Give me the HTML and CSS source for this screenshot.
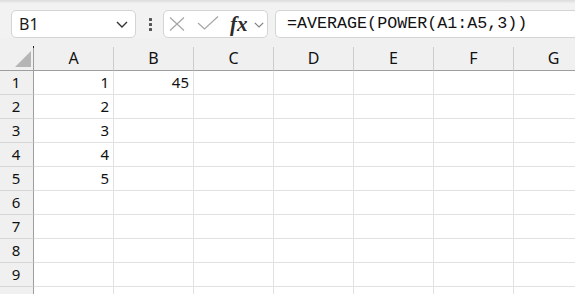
FILE: index.html
```html
<!DOCTYPE html>
<html>
<head>
<meta charset="utf-8">
<link rel="stylesheet" href="styles.css">
</head>
<body>
<div class="app">
  <div class="shade"></div>
  <div class="toolbar">
    <div class="namebox">
      <span class="name">B1</span>
      <svg class="chev" width="12" height="7" viewBox="0 0 12 7"><path d="M1 1 L6 6 L11 1" fill="none" stroke="#333" stroke-width="1.4"/></svg>
    </div>
    <div class="dots"><span></span><span></span><span></span></div>
    <div class="fxbox">
      <svg class="ico-x" width="16" height="14" viewBox="0 0 16 14"><path d="M1 0.5 L15 13.5 M15 0.5 L1 13.5" fill="none" stroke="#a6a6a6" stroke-width="1.2"/></svg>
      <svg class="ico-ok" width="22" height="14" viewBox="0 0 22 14"><path d="M1 7 L7.5 13 L21 0.5" fill="none" stroke="#a6a6a6" stroke-width="1.2"/></svg>
      <span class="fx">fx</span>
      <svg class="chev2" width="10" height="6" viewBox="0 0 10 6"><path d="M0.8 0.8 L5 5 L9.2 0.8" fill="none" stroke="#808080" stroke-width="1.2"/></svg>
    </div>
    <div class="formula">=AVERAGE(POWER(A1:A5,3))</div>
  </div>
  <div class="grid">
    <div class="corner"><span class="tri"></span><span class="dot"></span></div>
    <div class="ch">A</div><div class="ch">B</div><div class="ch">C</div><div class="ch">D</div><div class="ch">E</div><div class="ch">F</div><div class="ch">G</div>

    <div class="rh">1</div><div class="c">1</div><div class="c">45</div><div class="c"></div><div class="c"></div><div class="c"></div><div class="c"></div><div class="c"></div>
    <div class="rh">2</div><div class="c">2</div><div class="c"></div><div class="c"></div><div class="c"></div><div class="c"></div><div class="c"></div><div class="c"></div>
    <div class="rh">3</div><div class="c">3</div><div class="c"></div><div class="c"></div><div class="c"></div><div class="c"></div><div class="c"></div><div class="c"></div>
    <div class="rh">4</div><div class="c">4</div><div class="c"></div><div class="c"></div><div class="c"></div><div class="c"></div><div class="c"></div><div class="c"></div>
    <div class="rh">5</div><div class="c">5</div><div class="c"></div><div class="c"></div><div class="c"></div><div class="c"></div><div class="c"></div><div class="c"></div>
    <div class="rh">6</div><div class="c"></div><div class="c"></div><div class="c"></div><div class="c"></div><div class="c"></div><div class="c"></div><div class="c"></div>
    <div class="rh">7</div><div class="c"></div><div class="c"></div><div class="c"></div><div class="c"></div><div class="c"></div><div class="c"></div><div class="c"></div>
    <div class="rh">8</div><div class="c"></div><div class="c"></div><div class="c"></div><div class="c"></div><div class="c"></div><div class="c"></div><div class="c"></div>
    <div class="rh">9</div><div class="c"></div><div class="c"></div><div class="c"></div><div class="c"></div><div class="c"></div><div class="c"></div><div class="c"></div>
    <div class="rh">10</div><div class="c"></div><div class="c"></div><div class="c"></div><div class="c"></div><div class="c"></div><div class="c"></div><div class="c"></div>
  </div>
</div>
</body>
</html>
```
FILE: styles.css
```css
* { box-sizing: border-box; }
html, body {
  margin: 0;
  padding: 0;
  background: #f0f0f0;
}
.app {
  width: 575px;
  height: 294px;
  overflow: hidden;
  font-family: "Noto Sans", "Open Sans", sans-serif;
  color: #111;
  background: #f0f0f0;
}
.shade {
  height: 3px;
  background: linear-gradient(#dcdcdc, #ededed);
}
.toolbar {
  display: flex;
  align-items: stretch;
  height: 35px;
  padding: 7px 0 0 11px;
  background: #f2f2f2;
}
.namebox {
  width: 125px;
  height: 28px;
  background: #fff;
  border: 1px solid #d4d4d4;
  border-radius: 5px;
  display: flex;
  align-items: center;
  justify-content: space-between;
  padding: 0 7px 0 7px;
}
.name {
  font-size: 16px;
  line-height: 26px;
  color: #1a1a1a;
}
.chev { display: block; margin-top: 1px; }
.dots {
  width: 27px;
  display: flex;
  flex-direction: column;
  align-items: center;
  justify-content: center;
  gap: 2px;
  padding-left: 1px;
}
.dots span {
  width: 3px;
  height: 3px;
  background: #555;
  border-radius: 0.5px;
}
.fxbox {
  width: 105px;
  height: 28px;
  background: #fff;
  border: 1px solid #d4d4d4;
  border-radius: 5px;
  display: flex;
  align-items: center;
  padding-left: 5px;
}
.ico-x { display: block; }
.ico-ok { display: block; margin-left: 12px; margin-top: -2px; }
.fx {
  font-family: "Liberation Serif", "DejaVu Serif", serif;
  font-style: italic;
  font-weight: bold;
  font-size: 21px;
  color: #2b2b2b;
  margin-left: 11px;
  line-height: 26px;
  letter-spacing: 0px;
}
.chev2 { display: block; margin-left: 6px; margin-top: 1px; }
.formula {
  margin-left: 7px;
  flex: 1;
  height: 28px;
  background: #fff;
  border: 1px solid #d4d4d4;
  border-right: none;
  border-radius: 5px 0 0 5px;
  padding-left: 11px;
  font-family: "Liberation Mono", "DejaVu Sans Mono", monospace;
  font-size: 16.7px;
  line-height: 26px;
  color: #111;
  white-space: nowrap;
}
.grid {
  margin-top: 9px;
  display: grid;
  grid-template-columns: 34px repeat(7, 80px);
  grid-auto-rows: 24px;
  background: #fff;
}
.corner {
  position: relative;
  background: #f0f0f0;
  border-right: 1px solid #9e9e9e;
  border-bottom: 1px solid #9e9e9e;
}
.tri {
  position: absolute;
  left: 15px;
  top: 4px;
  width: 0;
  height: 0;
  border-left: 16px solid transparent;
  border-bottom: 16px solid #b5b5b5;
}
.dot {
  position: absolute;
  right: -1px;
  top: -1px;
  width: 1px;
  height: 2px;
  background: #222;
}
.ch {
  background: #f0f0f0;
  border-right: 1px solid #cdcdcd;
  border-bottom: 1px solid #9e9e9e;
  text-align: center;
  font-size: 16px;
  line-height: 23px;
  color: #111;
}
.rh {
  background: #f0f0f0;
  border-right: 1px solid #9e9e9e;
  border-bottom: 1px solid #d6d6d6;
  text-align: center;
  font-size: 15px;
  line-height: 23px;
  color: #111;
  padding-right: 1px;
}
.c {
  border-right: 1px solid #e1e1e1;
  border-bottom: 1px solid #e1e1e1;
  text-align: right;
  padding-right: 4px;
  font-size: 15px;
  line-height: 23px;
  color: #111;
}
```
